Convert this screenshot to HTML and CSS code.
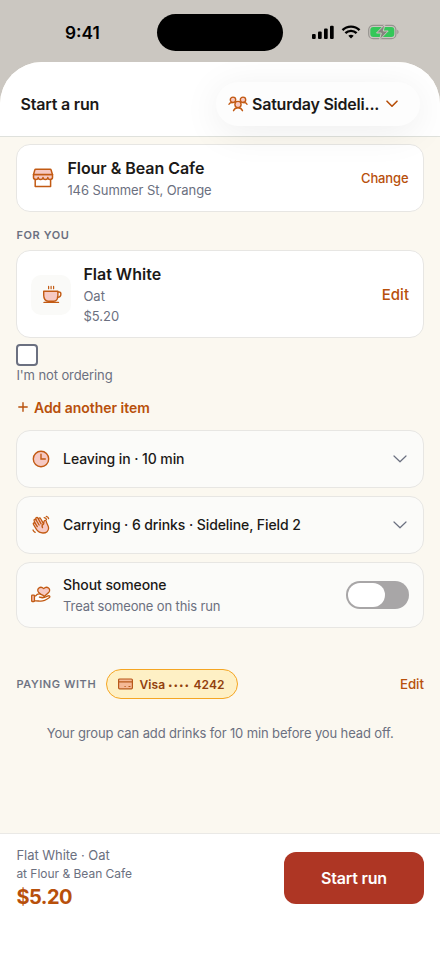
FILE: index.html
```html
<!DOCTYPE html>
<html lang="en">
<head>
<meta charset="utf-8">
<meta name="viewport" content="width=device-width, initial-scale=1">
<title>Start a run</title>
<link rel="stylesheet" href="styles.css">
</head>
<body>
<div class="screen">
  <div class="status">
    <span class="time">9:41</span>
    <span class="island"></span>
    <svg class="signals" width="90" height="18" viewBox="0 0 90 18">
      <g fill="#000">
        <rect x="2" y="11" width="3.700" height="5" rx="1.100"/>
        <rect x="8" y="8.500" width="3.700" height="7.500" rx="1.100"/>
        <rect x="14" y="5.500" width="3.700" height="10.500" rx="1.100"/>
        <rect x="20" y="2.700" width="3.700" height="13.300" rx="1.100"/>
        <path d="M38.300 12.800a4.200 4.200 0 0 1 5.400 0L41 15.600z"/>
      </g>
      <path d="M35.400 10.200a8 8 0 0 1 11.200 0M32.500 7.200a12 12 0 0 1 17 0" fill="none" stroke="#000" stroke-width="2.400"/>
      <rect x="58.700" y="2.300" width="27.200" height="13.400" rx="4.500" fill="none" stroke="#96938f" stroke-width="1.200"/>
      <rect x="60.300" y="3.900" width="24" height="10.200" rx="3" fill="#34c759"/>
      <path d="M87.300 6.800c1.600.5 1.600 3.900 0 4.400z" fill="#96938f"/>
      <path d="M75 1.200 66.500 10h4.800l-1.900 7L78.200 8h-4.900z" fill="#85857f" stroke="#cbc7c1" stroke-width="1" stroke-linejoin="round"/>
    </svg>
  </div>

  <main class="sheet">
    <header class="head">
      <h1>Start a run</h1>
      <button class="group">
        <svg width="20" height="18" viewBox="0 0 20 18" fill="none" stroke="#c25a13" stroke-width="1.400" stroke-linecap="round" stroke-linejoin="round">
          <circle cx="5" cy="4.800" r="2.700" fill="#f6c9c3"/><circle cx="15" cy="4.800" r="2.700" fill="#f6c9c3"/>
          <path d="M1 9.300C1.600 8 2.800 7.400 4.600 7.500M19 9.300c-.6-1.300-1.800-1.900-3.600-1.800M5.500 15.700c.7-2 2.100-3 4.500-3s3.800 1 4.500 3"/>
          <circle cx="10" cy="9.500" r="3.100" fill="#f6c9c3"/>
        </svg>
        <span class="group-name">Saturday Sideli...</span>
        <svg class="chev" width="12" height="8" viewBox="0 0 12 8" fill="none" stroke="#b8500b" stroke-width="1.600" stroke-linecap="round" stroke-linejoin="round"><path d="m1 1.200 5 5 5-5"/></svg>
      </button>
    </header>

    <div class="content">
      <section class="card cafe">
        <svg class="cafe-icon" width="22" height="20" viewBox="0 0 22 20" fill="none" stroke="#c25a13" stroke-width="1.500" stroke-linejoin="round" stroke-linecap="round">
          <path d="M3.200 10.500v8h15.400v-8" fill="#fff"/>
          <path d="M1.500 6.500v3c0 1.300 1.200 1.900 2.400 1.900 1.300 0 2.300-.8 2.300-2 0 1.200 1 2 2.400 2s2.400-.8 2.400-2c0 1.200 1 2 2.400 2s2.400-.8 2.400-2c0 1.200 1 2 2.300 2s2.400-.6 2.400-1.900v-3z" fill="#f6c9c3"/>
          <path d="M3.700 1.300h14.500q.7 0 .9.700l1.400 4.600H1.500l1.300-4.600q.2-.7.900-.7z" fill="#f6c9c3"/>
        </svg>
        <div class="info"><h2>Flour &amp; Bean Cafe</h2><p class="address">146 Summer St, Orange</p></div>
        <a class="change">Change</a>
      </section>

      <h3 class="label for">FOR YOU</h3>

      <section class="card drink">
        <span class="thumb">
          <svg class="cup" width="20" height="20" viewBox="0 0 20 20" fill="none" stroke="#c25a13" stroke-width="1.400" stroke-linecap="round" stroke-linejoin="round">
            <path d="M1.700 6.300h14.200v3.900c0 3.400-1.600 6-4.300 6H6.100c-2.700 0-4.400-2.600-4.400-6z" fill="#f6c9c3"/>
            <path d="M16 7h1c1.300 0 1.900.8 1.900 1.900 0 2-1.200 3.200-3.500 3.400M2 17.400h14.500"/>
            <path d="M6.600 1.400v2.300M9.100 1.400v2.300M11.600 1.400v2.300" stroke-width="1.200"/>
          </svg>
        </span>
        <div class="info"><h2>Flat White</h2><p>Oat</p><p>$5.20</p></div>
        <a class="edit">Edit</a>
      </section>

      <label class="skip"><span class="box"></span><span class="skip-text">I'm not ordering</span></label>

      <a class="add"><svg width="10" height="10" viewBox="0 0 10 10" stroke="#b8500b" stroke-width="1.400" stroke-linecap="round"><path d="M5 .8v8.400M.8 5h8.400"/></svg><span>Add another item</span></a>

      <div class="options">
        <section class="card option">
          <svg class="opt-icon" width="20" height="20" viewBox="0 0 20 20" stroke="#c25a13" stroke-width="1.400" stroke-linecap="round"><circle cx="10" cy="10" r="7.700" fill="#f6c9c3"/><path d="M10 5.300V10h4.300" fill="none"/></svg>
          <span class="opt-text leaving">Leaving in · 10 min</span>
          <svg class="down" width="14" height="8" viewBox="0 0 14 8" fill="none" stroke="#6b7080" stroke-width="1.200" stroke-linecap="round" stroke-linejoin="round"><path d="m1 1 6 5.800L13 1"/></svg>
        </section>
        <section class="card option">
          <svg class="opt-icon" width="20" height="20" viewBox="0 0 20 20" fill="none" stroke="#c25a13" stroke-width="1.300" stroke-linecap="round" stroke-linejoin="round">
            <path d="M5.600 14.700 2.500 9.500c-.8-1.400.9-2.500 1.800-1.100L3.200 6c-.7-1.500 1.100-2.400 1.900-1l-.3-.9c-.5-1.500 1.500-2.200 2.200-.8l.6 1.200c-.4-1.500 1.400-2.200 2.100-.8l2.900 5.200c.3-1.400.1-2.500.8-3.200.8-.6 1.800-.2 1.900.8.100 2.200 2.300 3.700 2.300 6.600 0 2.900-2.300 4.900-5.600 4.900-2.800 0-4.700-.9-6.400-3.300z" fill="#f6c9c3"/>
            <path d="m4.300 8.400 2 3.200M5.100 5l3 5M7.600 4.500l2.500 4.400M12.600 8.900c-1.500.8-2 2-1.100 3.700M13.200 2.600c1.200.2 2 .8 2.300 1.900M15.300 1.300c1.200.3 2 1 2.300 2.200M2 15c.4 1.100 1.100 1.800 2.200 2.300"/>
          </svg>
          <span class="opt-text carrying">Carrying · 6 drinks · Sideline, Field 2</span>
          <svg class="down" width="14" height="8" viewBox="0 0 14 8" fill="none" stroke="#6b7080" stroke-width="1.200" stroke-linecap="round" stroke-linejoin="round"><path d="m1 1 6 5.800L13 1"/></svg>
        </section>
        <section class="card option shout">
          <svg class="opt-icon" width="20" height="20" viewBox="0 0 20 20" fill="none" stroke="#c25a13" stroke-width="1.300" stroke-linecap="round" stroke-linejoin="round">
            <path d="M12.700 12 7.500 7.200C5 4.300 9.300.2 12.700 3.600c3.400-3.400 7.700.7 5.200 3.600z" fill="#f6c9c3"/>
            <path d="M3.400 10.900h1.300c1.300-1.800 3.100-2.400 5.200-1.600l2.300 1.100c1.700.9.800 2.200-.8 2l-3-.3 2.800.7c1.200.3 3.700-.9 5.300-1.700 2-1 3.300.5 1.600 1.700-2.700 1.900-5.700 3.400-8.200 3.400-2.100 0-3-.4-5-.4H3.400z" fill="#fff"/>
            <rect x=".7" y="10.200" width="2.700" height="6.300" rx=".5" fill="#f6c9c3"/>
          </svg>
          <div class="info"><span class="opt-text shout-title">Shout someone</span><p class="treat">Treat someone on this run</p></div>
          <span class="toggle"><span class="knob"></span></span>
        </section>
      </div>

      <div class="paying">
        <h3 class="label pay">PAYING WITH</h3>
        <span class="chip">
          <svg width="15" height="12" viewBox="0 0 15 12" fill="none" stroke="#b8591b" stroke-width="1.200"><rect x=".6" y="1" width="13.800" height="9.800" rx="1" fill="#f5b996"/><path d="M.8 3.800h13.400M6.500 8.500h1.200M10.500 8.500h2"/></svg>
          <span class="chip-text">Visa <span class="dots">••••</span> 4242</span>
        </span>
        <a class="pay-edit">Edit</a>
      </div>
      <p class="note"><span>Your group can add drinks for 10 min before you head off.</span></p>
    </div>

    <footer class="foot">
      <div class="summary"><p class="item">Flat White · Oat</p><p class="place">at Flour &amp; Bean Cafe</p><strong>$5.20</strong></div>
      <button class="start"><span>Start run</span></button>
    </footer>
  </main>
</div>
</body>
</html>
```
FILE: styles.css
```css
* { box-sizing: border-box; }
body, h1, h2, h3, p { margin: 0; }
body { font-family: Inter, "Liberation Sans", sans-serif; background: #cbc7c1; color: #1b1917; }
button { font: inherit; border: 0; color: inherit; padding: 0; }
svg { display: block; flex: none; }
span, a, p, h1, h2, h3, strong { white-space: nowrap; }
.screen { width: 440px; height: 956px; display: flex; flex-direction: column; overflow: hidden; }

.status { height: 62px; flex: none; display: grid; grid-template-columns: 157px 126px 1fr; padding-top: 14px; }
.time { font-size: 17.300px; font-weight: 600; line-height: 37px; padding-left: 65px; color: #000; }
.island { height: 37px; border-radius: 19px; background: #000; }
.signals { margin: 9px 0 0 27px; }

.sheet { flex: 1; display: flex; flex-direction: column; background: #fbf8f0; border-radius: 42px 42px 0 0; overflow: hidden; }
.head { height: 75px; flex: none; display: flex; justify-content: space-between; align-items: center; padding: 9px 20px 0 20.500px; background: #fff; border-bottom: 1px solid #dfe1dc; position: relative; z-index: 1; }
.head h1 { font-size: 16px; font-weight: 600; letter-spacing: -.2px; }
.group { width: 204px; height: 44px; border-radius: 22px; background: #fdfdfd; display: flex; align-items: center; padding-left: 12px; box-shadow: 0 6px 38px rgba(0,0,0,.075); }
.group-name { font-size: 16px; font-weight: 600; letter-spacing: -.22px; margin-left: 4px; width: 127px; text-align: left; }
.chev { margin-left: 7px; }

.content { flex: 1; padding: 7px 16px 0 16.400px; }
.card { display: flex; align-items: center; background: #fff; border: 1px solid #e7e6e3; border-radius: 14px; }
.info { flex: 1; }
.cafe { height: 68px; padding: 1px 14.500px 0 15px; }
.cafe-icon { margin: 0 13px 1px 0; }
h2 { font-size: 16px; font-weight: 600; line-height: 22px; margin-bottom: 1px; }
.cafe h2 { letter-spacing: -.04px; }
.info p { font-size: 13px; line-height: 20px; color: #6b7080; }
.info .address { letter-spacing: -.07px; }
a { color: #b8500b; font-weight: 500; }
.change { font-size: 13px; letter-spacing: -.12px; margin-bottom: 2px; }
.label { font-size: 11px; line-height: 14px; font-weight: 600; color: #6b7080; letter-spacing: .6px; }
.for { margin: 16px 0 8px; }
.drink { height: 88px; padding: 1px 14px 0; }
.thumb { width: 40px; height: 40px; margin-right: 12px; border-radius: 10px; background: #fafaf8; display: grid; place-items: center; }
.cup { margin-left: 1px; }
.edit { font-size: 15px; margin-bottom: 1px; }
.skip { display: flex; flex-direction: column; margin-top: 6px; }
.box { width: 22px; height: 22px; border: 2px solid #6b7080; border-radius: 4px; background: #fff; }
.skip-text { font-size: 13px; line-height: 18px; color: #6b7080; letter-spacing: -.1px; }
.add { display: flex; align-items: center; gap: 6px; padding-left: 1.600px; margin-top: 13px; height: 20px; font-size: 14px; font-weight: 600; letter-spacing: -.04px; }
.options { margin-top: 13px; display: flex; flex-direction: column; gap: 8px; }
.option { height: 58px; padding: 0 16px 0 14px; background: #fbfbf9; }
.opt-icon { margin-right: 11.700px; }
.opt-text { flex: 1; font-size: 14px; font-weight: 500; line-height: 22px; letter-spacing: -.09px; }
.shout { height: 66px; padding-right: 14px; }
.info .treat { letter-spacing: -.13px; }
.toggle { width: 63px; height: 28px; padding: 2px; border-radius: 14px; background: #a8a6a7; }
.knob { display: block; width: 37px; height: 24px; border-radius: 12px; background: #fff; }
.paying { display: flex; align-items: center; height: 30px; margin-top: 41px; }
.chip { display: flex; align-items: center; width: 132px; height: 30px; margin-left: 10px; padding-left: 11px; border: 1px solid #f5a623; border-radius: 15px; background: #fef0c5; color: #92400e; }
.chip-text { margin-left: 6px; font-size: 12px; font-weight: 600; letter-spacing: .1px; }
.dots { font-size: 8px; letter-spacing: 1.500px; vertical-align: 1px; }
.pay { width: 80px; font-weight: 500; letter-spacing: .65px; -webkit-text-stroke: .15px #6b7080; }
.pay-edit { margin-left: auto; font-size: 13.300px; }
.note { margin-top: 24px; text-align: center; font-size: 13px; line-height: 20px; color: #6b7080; letter-spacing: -.125px; }

.foot { height: 123px; flex: none; display: flex; justify-content: space-between; padding: 11px 16px 0 16.400px; background: #fff; border-top: 1px solid #eae9e6; }
.item { font-size: 13px; line-height: 20px; color: #6b7080; letter-spacing: -.04px; }
.place { font-size: 12px; line-height: 18px; color: #6b7080; letter-spacing: -.02px; }
.summary strong { display: block; font-size: 20px; line-height: 28px; font-weight: 700; color: #b8500b; letter-spacing: -.5px; }
.start { width: 140px; height: 52px; margin-top: 7px; border-radius: 12px; background: #ae3624; color: #fff; font-size: 16px; font-weight: 600; letter-spacing: -.18px; }
```
